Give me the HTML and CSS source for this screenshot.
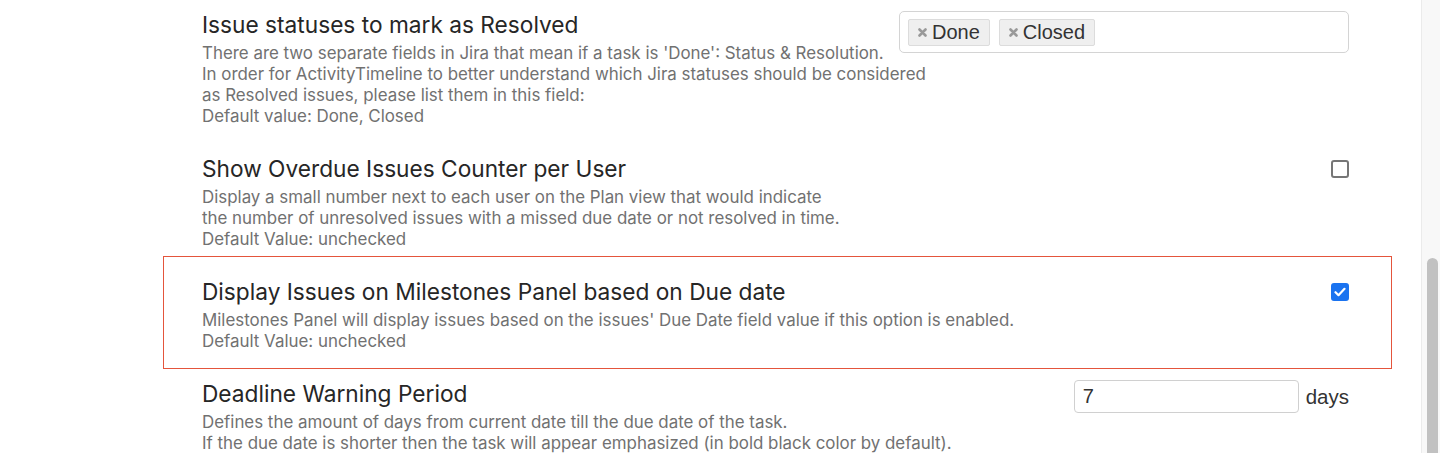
FILE: index.html
```html
<!DOCTYPE html>
<html lang="en">
<head>
    <meta charset="UTF-8">
    <meta name="viewport" content="width=device-width, initial-scale=1.0">
    <title>ActivityTimeline - Settings</title>
    <link rel="stylesheet" href="styles.css">
</head>
<body>
    <div class="page">
        <main class="settings">
            <div class="setting">
                <div class="setting-text">
                    <h2>Issue statuses to mark as Resolved</h2>
                    <p>There are two separate fields in Jira that mean if a task is 'Done': Status &amp; Resolution.<br>
                    In order for ActivityTimeline to better understand which Jira statuses should be considered<br>
                    as Resolved issues, please list them in this field:<br>
                    Default value: Done, Closed</p>
                </div>
                <div class="tag-box">
                    <span class="tag">
                        <svg class="tag-remove" width="9" height="9" viewBox="0 0 9 9"><path d="M1.5 1.5 L7.5 7.5 M7.5 1.5 L1.5 7.5" stroke="#999" stroke-width="2.6" stroke-linecap="round"/></svg>
                        Done
                    </span>
                    <span class="tag">
                        <svg class="tag-remove" width="9" height="9" viewBox="0 0 9 9"><path d="M1.5 1.5 L7.5 7.5 M7.5 1.5 L1.5 7.5" stroke="#999" stroke-width="2.6" stroke-linecap="round"/></svg>
                        Closed
                    </span>
                </div>
            </div>

            <div class="setting">
                <div class="setting-text">
                    <h2>Show Overdue Issues Counter per User</h2>
                    <p>Display a small number next to each user on the Plan view that would indicate<br>
                    the number of unresolved issues with a missed due date or not resolved in time.<br>
                    Default Value: unchecked</p>
                </div>
                <span class="checkbox"></span>
            </div>

            <div class="setting highlighted">
                <div class="setting-text">
                    <h2>Display Issues on Milestones Panel based on Due date</h2>
                    <p>Milestones Panel will display issues based on the issues' Due Date field value if this option is enabled.<br>
                    Default Value: unchecked</p>
                </div>
                <span class="checkbox checked">
                    <svg width="12" height="10" viewBox="0 0 12 10"><path d="M1.5 5.2 L4.5 8.2 L10.5 1.8" fill="none" stroke="#fff" stroke-width="2.2" stroke-linecap="round" stroke-linejoin="round"/></svg>
                </span>
            </div>

            <div class="setting">
                <div class="setting-text">
                    <h2>Deadline Warning Period</h2>
                    <p>Defines the amount of days from current date till the due date of the task.<br>
                    If the due date is shorter then the task will appear emphasized (in bold black color by default).</p>
                </div>
                <div class="period">
                    <input type="text" class="period-input" value="7">
                    <span class="period-unit">days</span>
                </div>
            </div>
        </main>

        <div class="scrollbar">
            <div class="scrollbar-thumb"></div>
        </div>
    </div>
</body>
</html>
```

FILE: styles.css
```css
* {
    margin: 0;
    padding: 0;
    box-sizing: border-box;
}

html, body {
    height: 100%;
    overflow: hidden;
}

body {
    background: #fff;
    font-family: 'Inter', 'Noto Sans', sans-serif;
}

.page {
    display: flex;
    height: 453px;
}

.settings {
    flex: 1;
    min-width: 0;
    padding-left: 163px;
    padding-right: 29px;
}

.setting {
    display: flex;
    justify-content: space-between;
    align-items: flex-start;
    gap: 16px;
    padding: 11px 43px 17px 39px;
}

/* long help lines may run under the control, as in the app */
.setting-text {
    flex: 1;
    min-width: 0;
    white-space: nowrap;
}

.setting h2 {
    font-size: 22.7px;
    font-weight: 400;
    line-height: 28px;
    color: #262626;
    margin-bottom: 4px;
}

.setting p {
    font-size: 16.9px;
    line-height: 21px;
    color: #717171;
}

.highlighted {
    border: 1.5px solid #e4553c;
    padding: 21px 42px 16px 38px;
    margin-top: -11px;
}

/* tag select */
.tag-box {
    position: relative;
    flex-shrink: 0;
    width: 450px;
    height: 42px;
    background: #fff;
    border: 1px solid #d4d4d4;
    border-radius: 5px;
    display: flex;
    align-items: center;
    gap: 9px;
    padding: 0 8px;
}

.tag {
    display: inline-flex;
    align-items: center;
    gap: 5px;
    height: 27px;
    padding: 0 9px 0 9px;
    background: #efefef;
    border: 1px solid #dcdcdc;
    border-radius: 2px;
    font-family: 'Liberation Sans', Arial, sans-serif;
    font-size: 20px;
    color: #333;
}

.tag-remove {
    flex-shrink: 0;
}

/* checkbox */
.checkbox {
    flex-shrink: 0;
    width: 18px;
    height: 18px;
    margin-top: 5px;
    border: 2px solid #767676;
    border-radius: 3px;
    display: flex;
    align-items: center;
    justify-content: center;
}

.checkbox.checked {
    background: #1a73f0;
    border-color: #1a73f0;
}

/* deadline input */
.period {
    flex-shrink: 0;
    display: flex;
    align-items: center;
    gap: 7px;
}

.period-input {
    width: 225px;
    height: 33px;
    border: 1px solid #d0d0d0;
    border-radius: 4px;
    padding: 0 8px;
    font-family: 'Liberation Sans', Arial, sans-serif;
    font-size: 20px;
    color: #333;
    outline: none;
}

.period-unit {
    font-family: 'Liberation Sans', Arial, sans-serif;
    font-size: 20.5px;
    color: #333;
}

/* fake window scrollbar */
.scrollbar {
    flex-shrink: 0;
    width: 19px;
    background: #f8f8f8;
    border-left: 1px solid #ebebeb;
    padding: 258px 2px 0 5px;
}

.scrollbar-thumb {
    width: 11px;
    height: 100%;
    background: #c1c1c1;
    border-radius: 6px 6px 0 0;
}
```
